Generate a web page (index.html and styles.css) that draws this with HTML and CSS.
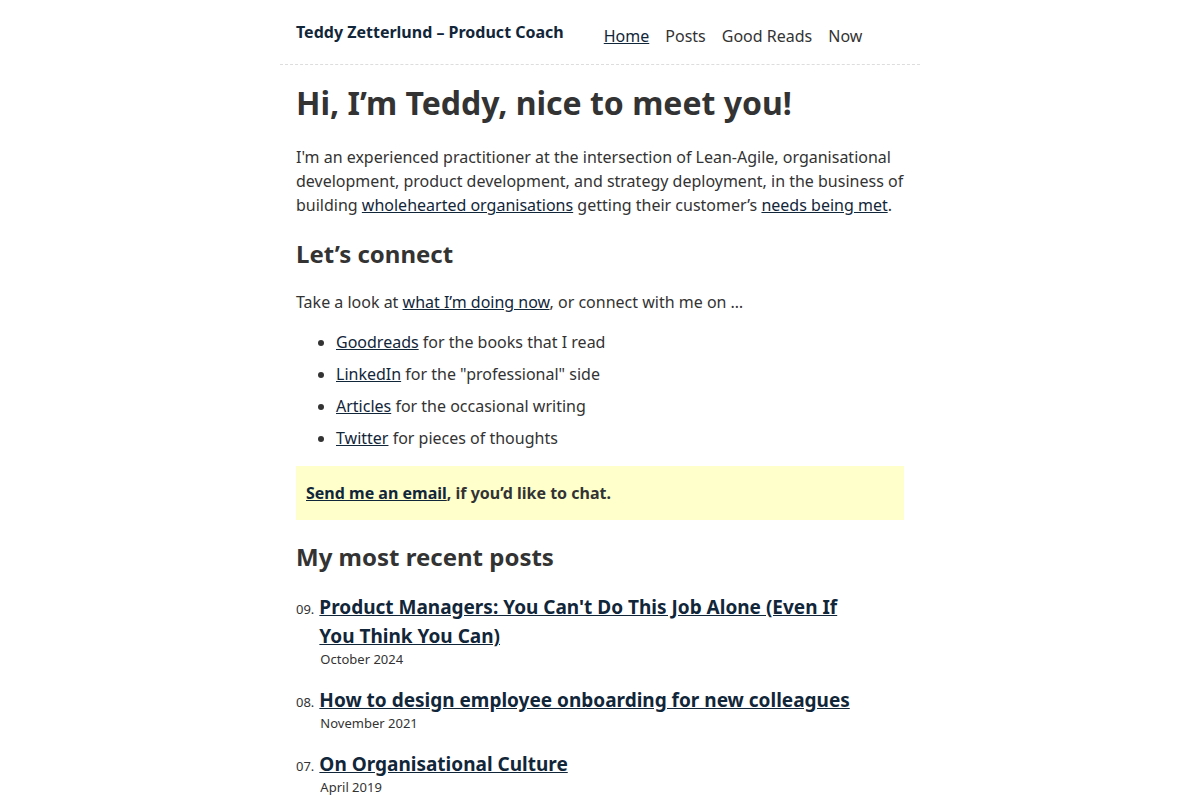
FILE: index.html
```
<!DOCTYPE html>
<html lang="en">

<head>
    <meta charset="UTF-8">
    <meta name="viewport" content="width=device-width, initial-scale=1.0">
    <title>Teddy Zetterlund – Product Coach</title>
    <link rel="stylesheet" href="styles.css">
</head>

<body>
    <div class="page">
        <header class="site-header">
            <a class="site-title" href="#">Teddy Zetterlund – Product Coach</a>
            <nav class="site-nav">
                <a class="active" href="#">Home</a>
                <a href="#">Posts</a>
                <a href="#">Good Reads</a>
                <a href="#">Now</a>
            </nav>
        </header>

        <main class="content">
            <h1>Hi, I’m Teddy, nice to meet you!</h1>

            <p>I'm an experienced practitioner at the intersection of Lean-Agile, organisational development, product development, and strategy deployment, in the business of building <a href="#">wholehearted organisations</a> getting their customer’s <a href="#">needs being met</a>.</p>

            <h2>Let’s connect</h2>

            <p>Take a look at <a href="#">what I’m doing now</a>, or connect with me on …</p>

            <ul class="connect-list">
                <li><a href="#">Goodreads</a> for the books that I read</li>
                <li><a href="#">LinkedIn</a> for the "professional" side</li>
                <li><a href="#">Articles</a> for the occasional writing</li>
                <li><a href="#">Twitter</a> for pieces of thoughts</li>
            </ul>

            <div class="callout">
                <a href="#">Send me an email</a>, if you’d like to chat.
            </div>

            <h2>My most recent posts</h2>

            <ol class="post-list">
                <li>
                    <span class="post-num">09.</span>
                    <div class="post-body">
                        <a class="post-title" href="#">Product Managers: You Can't Do This Job Alone (Even If You Think You Can)</a>
                        <div class="post-date">October 2024</div>
                    </div>
                </li>
                <li>
                    <span class="post-num">08.</span>
                    <div class="post-body">
                        <a class="post-title" href="#">How to design employee onboarding for new colleagues</a>
                        <div class="post-date">November 2021</div>
                    </div>
                </li>
                <li>
                    <span class="post-num">07.</span>
                    <div class="post-body">
                        <a class="post-title" href="#">On Organisational Culture</a>
                        <div class="post-date">April 2019</div>
                    </div>
                </li>
            </ol>
        </main>
    </div>
</body>

</html>
```

FILE: styles.css
```
/* Base */
body {
    font-family: "Noto Sans", "Open Sans", sans-serif;
    font-size: 16px;
    line-height: 24px;
    color: #333;
    margin: 0;
    padding: 0;
    background-color: #fff;
}

a {
    color: #12263a;
    text-decoration: underline;
}

.page {
    width: 640px;
    margin: 0 auto;
}

/* Header */
.site-header {
    display: flex;
    align-items: flex-start;
    gap: 40px;
    height: 65px;
    box-sizing: border-box;
    padding: 20px 16px 0;
    border-bottom: 1px dashed #ddd;
}

.site-title {
    font-weight: bold;
    color: #12263a;
    text-decoration: none;
}

.site-nav {
    display: flex;
    gap: 16px;
    padding-top: 4px;
}

.site-nav a {
    color: #333;
    text-decoration: none;
}

.site-nav a.active {
    color: #12263a;
    text-decoration: underline;
}

/* Content */
.content {
    padding: 0 16px;
}

h1 {
    font-size: 32px;
    line-height: 40px;
    margin: 18px 0 22px;
}

h2 {
    font-size: 24px;
    line-height: 32px;
    margin: 21px 0 20px;
}

p {
    margin: 0;
}

.connect-list {
    margin: 16px 0;
    padding-left: 40px;
}

.connect-list li {
    margin-bottom: 8px;
}

.connect-list li:last-child {
    margin-bottom: 0;
}

.callout {
    background-color: #ffffcc;
    font-weight: bold;
    padding: 15px 10px;
}

/* Posts */
.post-list {
    list-style: none;
    margin: 0;
    padding: 0;
}

.post-list li {
    display: flex;
    align-items: baseline;
    gap: 5px;
    margin-bottom: 19px;
}

.post-num {
    font-size: 13px;
}

.post-body {
    max-width: 540px;
}

.post-title {
    font-size: 19px;
    line-height: 29px;
    font-weight: bold;
}

.post-date {
    font-size: 13px;
    line-height: 16px;
    padding-left: 1px;
}
```
